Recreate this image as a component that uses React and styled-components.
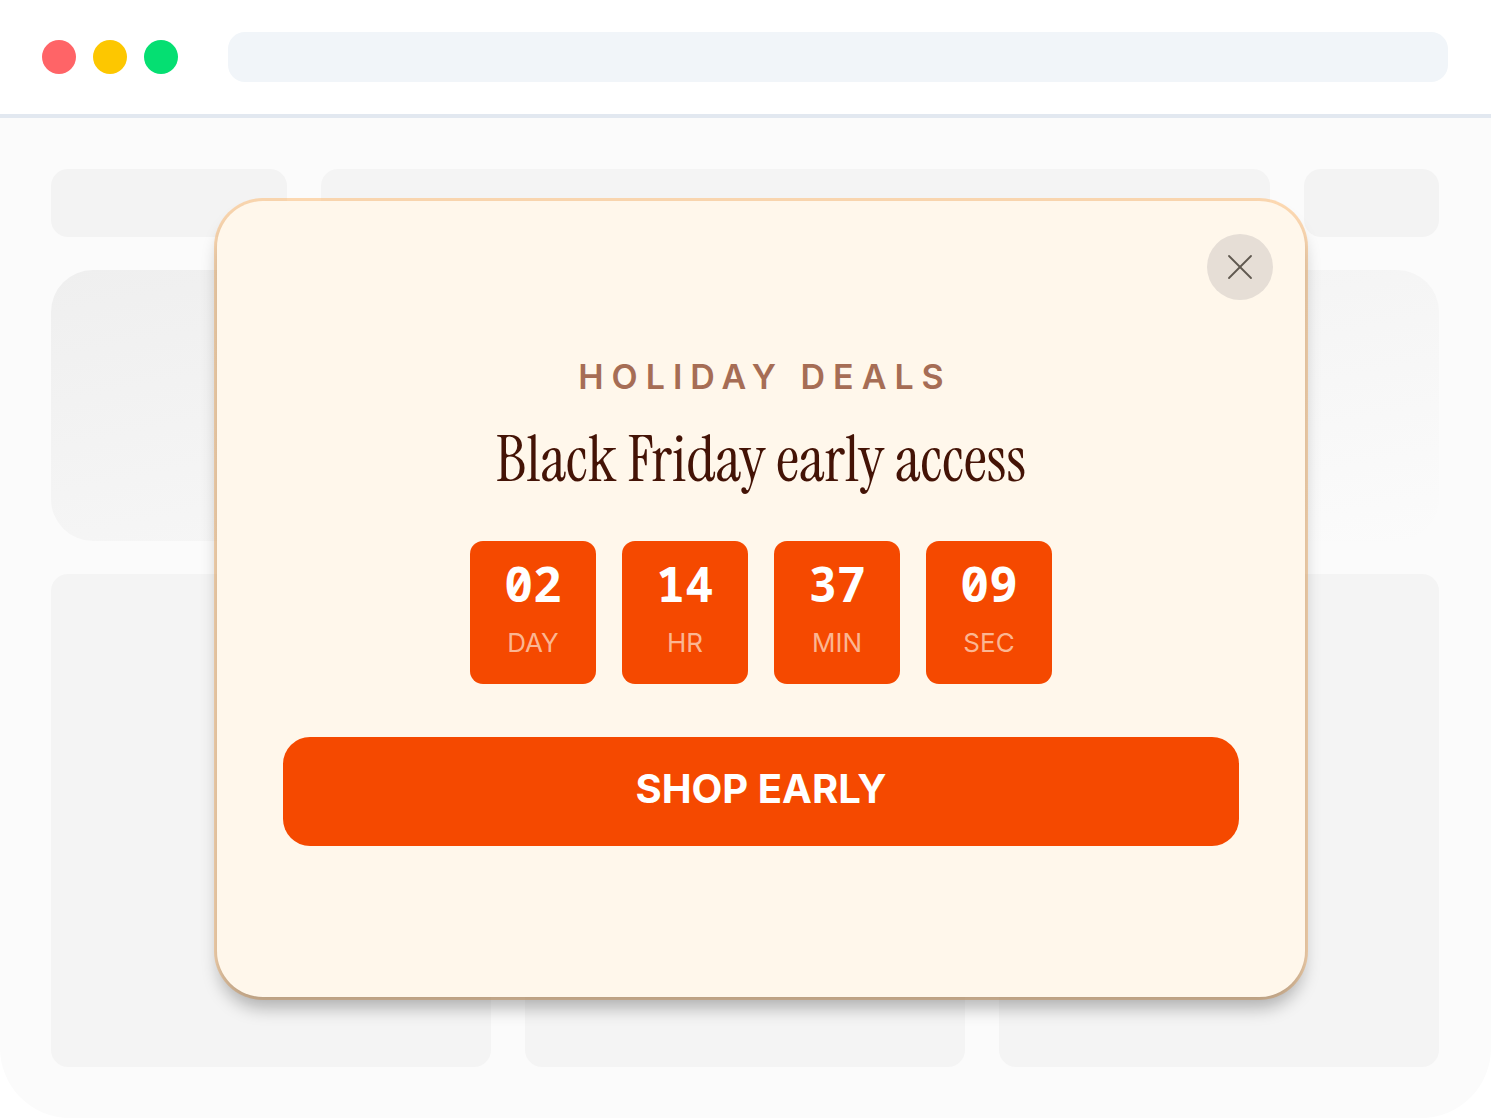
import React from "react";
import styled, { createGlobalStyle } from "styled-components";
import { X } from "lucide-react";

const GlobalStyle = createGlobalStyle`
  * {
    box-sizing: border-box;
  }
  body {
    margin: 0;
    background: #fff;
    font-family: Inter, "Liberation Sans", sans-serif;
  }
`;

const Browser = styled.div`
  position: relative;
  overflow: hidden;
  background: #fbfbfb;
  border-radius: 0 0 70px 70px;
`;

const Toolbar = styled.header`
  display: flex;
  align-items: center;
  gap: 50px;
  padding: 32px 43px 32px 42px;
  background: #fff;
  border-bottom: 4px solid #e2e8f0;
`;

const Dots = styled.div`
  display: flex;
  gap: 17px;
`;

const Dot = styled.span`
  width: 34px;
  height: 34px;
  border-radius: 50%;
  background: ${(props) => props.$color};
`;

const AddressBar = styled.input`
  flex: 1;
  min-width: 0;
  height: 50px;
  padding: 0 17px;
  border: none;
  border-radius: 17px;
  background: #f1f5f9;
  font: inherit;
`;

const Skeleton = styled.div`
  display: flex;
  flex-direction: column;
  gap: 33px;
  padding: 51px 52px 51px 51px;
`;

const SkeletonRow = styled.div`
  display: grid;
  grid-template-columns: ${(props) => props.$columns};
  gap: 34px;
`;

const Block = styled.div`
  height: ${(props) => props.$height}px;
  border-radius: 17px;
  background: ${(props) => props.$tone || "#f4f4f4"};
`;

const Hero = styled.div`
  height: 271px;
  border-radius: 42px;
  background: linear-gradient(to bottom right, #efefef, #fbfbfb);
`;

const Overlay = styled.div`
  position: absolute;
  inset: 0;
  padding: 201px 186px 120px 217px;
`;

const Modal = styled.section`
  position: relative;
  display: flex;
  flex-direction: column;
  align-items: center;
  padding: 151px 66px;
  border-radius: 46px;
  background: #fff7eb;
  box-shadow: 0 13px 17px -2px rgba(0, 0, 0, 0.28),
    0 0 0 3px rgba(255, 184, 106, 0.5);
`;

const CloseButton = styled.button`
  position: absolute;
  top: 33px;
  right: 32px;
  display: flex;
  align-items: center;
  justify-content: center;
  width: 66px;
  height: 66px;
  padding: 0;
  border: none;
  border-radius: 50%;
  background: #e6ded6;
  color: #5f584f;
  cursor: pointer;
`;

const Eyebrow = styled.p`
  margin: 0;
  padding-left: 8px;
  font-size: 34px;
  font-weight: 600;
  line-height: 50px;
  letter-spacing: 8px;
  color: #a66d55;
`;

const Title = styled.h1`
  margin: 22px 0 45px;
  font-family: "Instrument Serif", "Liberation Serif", serif;
  font-size: 64px;
  font-weight: 400;
  line-height: 72px;
  color: #441306;
`;

const Countdown = styled.div`
  display: flex;
  gap: 26px;
`;

const Tile = styled.div`
  width: 126px;
  padding: 13px 0;
  border-radius: 13px;
  background: #f54900;
  text-align: center;
`;

const TileValue = styled.div`
  font-family: "Noto Sans Mono", "DejaVu Sans Mono", monospace;
  font-size: 48px;
  font-weight: 700;
  line-height: 60px;
  color: #fff;
`;

const TileLabel = styled.div`
  font-size: 26px;
  font-weight: 400;
  line-height: 57px;
  color: #fbb692;
`;

const ShopButton = styled.button`
  align-self: stretch;
  margin-top: 53px;
  height: 109px;
  padding: 0 0 5px;
  border: none;
  border-radius: 27px;
  background: #f54900;
  color: #fff;
  font-family: inherit;
  font-size: 40px;
  font-weight: 700;
  line-height: 50px;
  cursor: pointer;
`;

const DOT_COLORS = ["#ff6467", "#fdc700", "#05df72"];

const TIME_LEFT = [
  { label: "DAY", value: "02" },
  { label: "HR", value: "14" },
  { label: "MIN", value: "37" },
  { label: "SEC", value: "09" },
];

function App() {
  return (
    <>
      <GlobalStyle />
      <Browser>
        <Toolbar>
          <Dots>
            {DOT_COLORS.map((color) => (
              <Dot key={color} $color={color} />
            ))}
          </Dots>
          <AddressBar type="text" aria-label="Address" />
        </Toolbar>
        <Skeleton aria-hidden="true">
          <SkeletonRow $columns="236px 1fr 135px">
            <Block $height={68} $tone="#f3f3f3" />
            <Block $height={68} />
            <Block $height={68} $tone="#f3f3f3" />
          </SkeletonRow>
          <Hero />
          <SkeletonRow $columns="repeat(3, 1fr)">
            <Block $height={493} />
            <Block $height={493} />
            <Block $height={493} />
          </SkeletonRow>
        </Skeleton>
        <Overlay>
          <Modal role="dialog" aria-labelledby="deal-title">
            <CloseButton type="button" aria-label="Close">
              <X size={44} strokeWidth={1} />
            </CloseButton>
            <Eyebrow>HOLIDAY DEALS</Eyebrow>
            <Title id="deal-title">Black Friday early access</Title>
            <Countdown>
              {TIME_LEFT.map((item) => (
                <Tile key={item.label}>
                  <TileValue>{item.value}</TileValue>
                  <TileLabel>{item.label}</TileLabel>
                </Tile>
              ))}
            </Countdown>
            <ShopButton type="button">SHOP EARLY</ShopButton>
          </Modal>
        </Overlay>
      </Browser>
    </>
  );
}

export default App;
